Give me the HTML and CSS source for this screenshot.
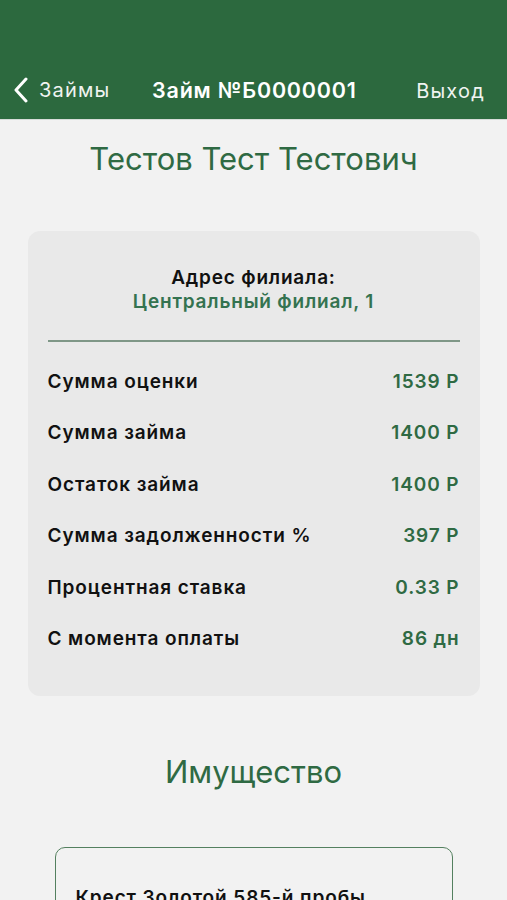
FILE: index.html
```html
<!DOCTYPE html>
<html lang="ru">
<head>
    <meta charset="UTF-8">
    <meta name="viewport" content="width=device-width, initial-scale=1.0">
    <title>Займ №Б0000001</title>
    <link rel="stylesheet" href="styles.css">
</head>
<body>
    <header class="nav-bar">
        <a class="nav-back" href="#">
            <svg width="16" height="26" viewBox="0 0 16 26"><polyline points="13,2 3,13 13,24" fill="none" stroke="#fff" stroke-width="3" stroke-linecap="round" stroke-linejoin="round"/></svg>
            <span>Займы</span>
        </a>
        <div class="nav-title">Займ №Б0000001</div>
        <a class="nav-exit" href="#">Выход</a>
    </header>

    <main class="content">
        <h1 class="page-title">Тестов Тест Тестович</h1>

        <section class="loan-card">
            <div class="branch">
                <div class="branch-label">Адрес филиала:</div>
                <div class="branch-name">Центральный филиал, 1</div>
            </div>
            <div class="divider"></div>
            <div class="rows">
                <div class="row"><span>Сумма оценки</span><span class="value">1539 Р</span></div>
                <div class="row"><span>Сумма займа</span><span class="value">1400 Р</span></div>
                <div class="row"><span>Остаток займа</span><span class="value">1400 Р</span></div>
                <div class="row"><span>Сумма задолженности %</span><span class="value">397 Р</span></div>
                <div class="row"><span>Процентная ставка</span><span class="value">0.33 Р</span></div>
                <div class="row"><span>С момента оплаты</span><span class="value">86 дн</span></div>
            </div>
        </section>

        <h2 class="section-title">Имущество</h2>

        <section class="item-card">
            <div class="item-name">Крест Золотой 585-й пробы</div>
        </section>
    </main>
</body>
</html>
```

FILE: styles.css
```css
body {
    margin: 0;
    padding: 0;
    background: #f2f2f2;
    font-family: Inter, "Noto Sans", sans-serif;
    color: #111;
    height: 900px;
    overflow: hidden;
}

.nav-bar {
    height: 120px;
    background: #2c693e;
    box-sizing: border-box;
    padding: 0 22px 16px 13px;
    display: flex;
    align-items: flex-end;
    justify-content: space-between;
    color: #fff;
    border-bottom: 1px solid #d6dcd8;
}

.nav-back, .nav-exit {
    color: #f0f4f1;
    text-decoration: none;
    font-size: 20px;
    letter-spacing: 1.2px;
    display: flex;
    align-items: center;
    gap: 10px;
}

.nav-back svg {
    display: block;
}

.nav-title {
    font-size: 21.5px;
    font-weight: 600;
    letter-spacing: 0.8px;
    margin-right: 18px;
}

.content {
    display: flex;
    flex-direction: column;
    align-items: center;
}

.page-title, .section-title {
    margin: 0;
    font-weight: 400;
    font-size: 31px;
    color: #2f6a43;
}

.page-title {
    margin-top: 20px;
}

.loan-card {
    width: 452px;
    box-sizing: border-box;
    margin-top: 54px;
    background: #e9e9e9;
    border-radius: 12px;
    padding: 35px 20px 45px;
}

.branch {
    text-align: center;
    font-size: 19px;
    font-weight: 600;
    letter-spacing: 0.8px;
    line-height: 24px;
}

.branch-name {
    color: #347350;
}

.divider {
    height: 2px;
    background: #7f9787;
    margin-top: 26px;
}

.rows {
    display: flex;
    flex-direction: column;
    gap: 26.4px;
    margin-top: 27px;
}

.row {
    display: flex;
    justify-content: space-between;
    font-size: 19px;
    font-weight: 600;
    letter-spacing: 0.9px;
    line-height: 25px;
}

.row .value {
    color: #2f6a43;
}

.section-title {
    margin-top: 57px;
}

.item-card {
    width: 398px;
    box-sizing: border-box;
    margin-top: 57px;
    border: 1.5px solid #54805f;
    border-radius: 10px;
    padding: 38px 20px 40px;
}

.item-name {
    font-size: 19px;
    font-weight: 600;
    letter-spacing: 0.9px;
}
```
